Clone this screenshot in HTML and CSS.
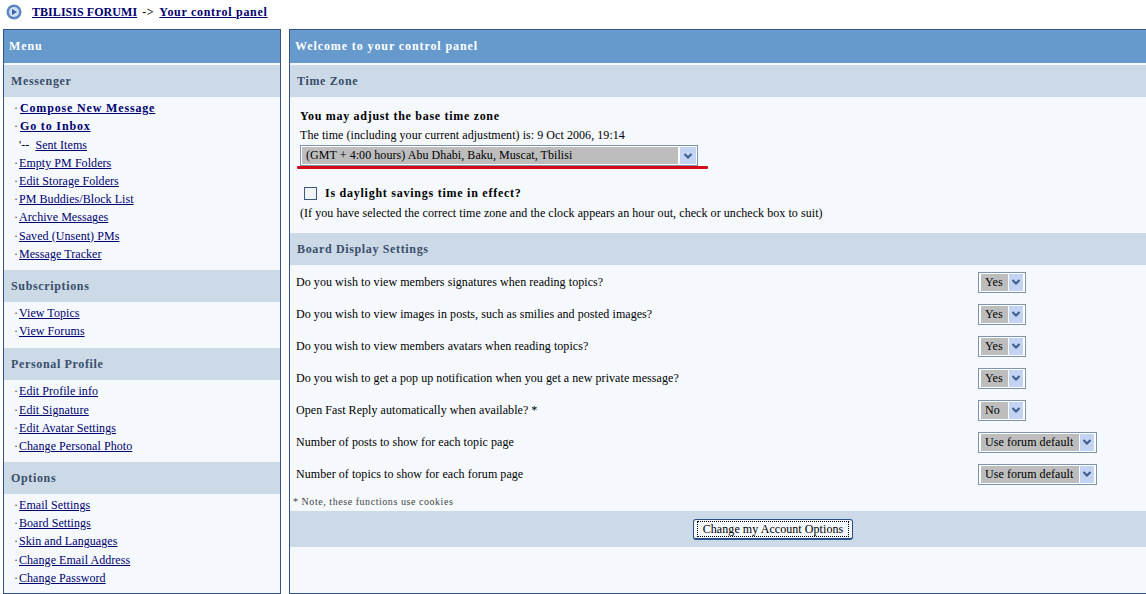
FILE: index.html
```html
<!DOCTYPE html>
<html lang="en">
<head>
  <meta charset="UTF-8">
  <title>Your control panel</title>
  <link rel="stylesheet" href="styles.css">
</head>
<body>

  <div class="nav">
    <svg class="nav-icon" width="16" height="16" viewBox="0 0 16 16">
      <circle cx="8" cy="8" r="7.5" fill="#5f86c4"/>
      <circle cx="8" cy="8" r="5" fill="#cfe0f5"/>
      <path d="M6 5l5 3-5 3z" fill="#3c64a8"/>
    </svg>
    <a class="nav-home" href="#">TBILISIS FORUMI</a>
    <span class="nav-sep">-&gt;</span>
    <a href="#">Your control panel</a>
  </div>

  <div class="page">
    <div class="panel menu">
      <div class="maintitle">Menu</div>

      <div class="subtitle">Messenger</div>
      <ul class="links">
        <li><a class="strong" href="#">Compose New Message</a></li>
        <li><a class="strong" href="#">Go to Inbox</a></li>
        <li class="sub">'-- <a href="#">Sent Items</a></li>
        <li><a href="#">Empty PM Folders</a></li>
        <li><a href="#">Edit Storage Folders</a></li>
        <li><a href="#">PM Buddies/Block List</a></li>
        <li><a href="#">Archive Messages</a></li>
        <li><a href="#">Saved (Unsent) PMs</a></li>
        <li><a href="#">Message Tracker</a></li>
      </ul>

      <div class="subtitle">Subscriptions</div>
      <ul class="links short">
        <li><a href="#">View Topics</a></li>
        <li><a href="#">View Forums</a></li>
      </ul>

      <div class="subtitle">Personal Profile</div>
      <ul class="links">
        <li><a href="#">Edit Profile info</a></li>
        <li><a href="#">Edit Signature</a></li>
        <li><a href="#">Edit Avatar Settings</a></li>
        <li><a href="#">Change Personal Photo</a></li>
      </ul>

      <div class="subtitle">Options</div>
      <ul class="links">
        <li><a href="#">Email Settings</a></li>
        <li><a href="#">Board Settings</a></li>
        <li><a href="#">Skin and Languages</a></li>
        <li><a href="#">Change Email Address</a></li>
        <li><a href="#">Change Password</a></li>
      </ul>
    </div>

    <div class="panel content">
      <div class="maintitle">Welcome to your control panel</div>

      <div class="subtitle">Time Zone</div>
      <div class="timezone">
        <p class="tz-title">You may adjust the base time zone</p>
        <p class="tz-time">The time (including your current adjustment) is: 9 Oct 2006, 19:14</p>
        <div class="tz-select">
          <div class="select wide">
            <span class="select-text">(GMT + 4:00 hours) Abu Dhabi, Baku, Muscat, Tbilisi</span>
            <span class="select-btn"><svg width="14" height="14" viewBox="0 0 14 14"><path d="M3.500 5l3.500 3.500L10.500 5" fill="none" stroke="#3d5a8c" stroke-width="2"/></svg></span>
          </div>
          <div class="red-line"></div>
        </div>
        <div class="dst">
          <span class="checkbox"></span>
          <span class="dst-label">Is daylight savings time in effect?</span>
        </div>
        <p class="dst-note">(If you have selected the correct time zone and the clock appears an hour out, check or uncheck box to suit)</p>
      </div>

      <div class="subtitle">Board Display Settings</div>
      <div class="settings">
        <div class="row">
          <span class="row-label">Do you wish to view members signatures when reading topics?</span>
          <div class="select"><span class="select-text short">Yes</span><span class="select-btn"><svg width="14" height="14" viewBox="0 0 14 14"><path d="M3.500 5l3.500 3.500L10.500 5" fill="none" stroke="#3d5a8c" stroke-width="2"/></svg></span></div>
        </div>
        <div class="row">
          <span class="row-label">Do you wish to view images in posts, such as smilies and posted images?</span>
          <div class="select"><span class="select-text short">Yes</span><span class="select-btn"><svg width="14" height="14" viewBox="0 0 14 14"><path d="M3.500 5l3.500 3.500L10.500 5" fill="none" stroke="#3d5a8c" stroke-width="2"/></svg></span></div>
        </div>
        <div class="row">
          <span class="row-label">Do you wish to view members avatars when reading topics?</span>
          <div class="select"><span class="select-text short">Yes</span><span class="select-btn"><svg width="14" height="14" viewBox="0 0 14 14"><path d="M3.500 5l3.500 3.500L10.500 5" fill="none" stroke="#3d5a8c" stroke-width="2"/></svg></span></div>
        </div>
        <div class="row">
          <span class="row-label">Do you wish to get a pop up notification when you get a new private message?</span>
          <div class="select"><span class="select-text short">Yes</span><span class="select-btn"><svg width="14" height="14" viewBox="0 0 14 14"><path d="M3.500 5l3.500 3.500L10.500 5" fill="none" stroke="#3d5a8c" stroke-width="2"/></svg></span></div>
        </div>
        <div class="row">
          <span class="row-label">Open Fast Reply automatically when available? *</span>
          <div class="select"><span class="select-text short">No</span><span class="select-btn"><svg width="14" height="14" viewBox="0 0 14 14"><path d="M3.500 5l3.500 3.500L10.500 5" fill="none" stroke="#3d5a8c" stroke-width="2"/></svg></span></div>
        </div>
        <div class="row">
          <span class="row-label">Number of posts to show for each topic page</span>
          <div class="select"><span class="select-text long">Use forum default</span><span class="select-btn"><svg width="14" height="14" viewBox="0 0 14 14"><path d="M3.500 5l3.500 3.500L10.500 5" fill="none" stroke="#3d5a8c" stroke-width="2"/></svg></span></div>
        </div>
        <div class="row">
          <span class="row-label">Number of topics to show for each forum page</span>
          <div class="select"><span class="select-text long">Use forum default</span><span class="select-btn"><svg width="14" height="14" viewBox="0 0 14 14"><path d="M3.500 5l3.500 3.500L10.500 5" fill="none" stroke="#3d5a8c" stroke-width="2"/></svg></span></div>
        </div>
      </div>
      <p class="cookie-note">* Note, these functions use cookies</p>

      <div class="submit-bar">
        <button class="submit" type="button"><span>Change my Account Options</span></button>
      </div>
    </div>
  </div>

</body>
</html>
```

FILE: styles.css
```css
html, body {
  height: 100%;
}

body {
  margin: 0;
  background: #fff;
  color: #000;
  font-family: "Liberation Serif", serif;
  font-size: 12px;
  letter-spacing: 0.06px;
  overflow: hidden;
}

a {
  color: #000070;
  text-decoration: underline;
}

p {
  margin: 0;
}

.nav {
  display: flex;
  align-items: center;
  height: 29px;
  padding: 0 0 5px 6px;
  box-sizing: border-box;
  font-weight: bold;
  letter-spacing: 0.7px;
}

.nav-icon {
  margin-right: 10px;
}

.nav-home {
  letter-spacing: 0.05px;
}

.nav-sep {
  margin: 0 5px;
  color: #222;
}

.page {
  display: flex;
  gap: 8px;
  height: 565px;
  padding-left: 3px;
}

.panel {
  box-sizing: border-box;
  border: 1px solid #345487;
  background: #f5f9fd;
}

.menu {
  width: 278px;
  flex: none;
}

.content {
  flex: 1;
  min-width: 0;
  border-right: 0;
}

.maintitle {
  height: 33px;
  line-height: 33px;
  padding-left: 5px;
  margin-bottom: 2px;
  background: #6699cc;
  color: #fff;
  font-weight: bold;
  letter-spacing: 0.9px;
}

.subtitle {
  height: 32px;
  line-height: 32px;
  padding-left: 7px;
  background: #ccd9e6;
  color: #3a4f6c;
  font-weight: bold;
  letter-spacing: 0.65px;
}

.links {
  list-style: none;
  margin: 0;
  padding: 2.3px 0 6.7px 15px;
}

.links.short {
  padding-bottom: 7.7px;
}

.links li {
  position: relative;
  height: 18.2px;
  line-height: 18.2px;
}

.links li::before {
  content: "\00b7";
  position: absolute;
  left: -5px;
  color: #444;
}

.links li.sub::before {
  content: none;
}

.links li.sub a {
  margin-left: 3px;
}

.links .strong {
  margin-left: 1px;
  font-weight: bold;
  letter-spacing: 0.84px;
}

.timezone {
  padding: 12px 0 0 10px;
  height: 136px;
  box-sizing: border-box;
}

.tz-title {
  font-weight: bold;
  letter-spacing: 0.7px;
  line-height: 14px;
  margin-bottom: 5px;
}

.tz-time {
  line-height: 14px;
}

.tz-select {
  position: relative;
  width: 398px;
  margin-top: 3px;
}

.select {
  display: inline-flex;
  gap: 1px;
  box-sizing: border-box;
  height: 21px;
  padding: 1px 2px;
  border: 1px solid #7e93ad;
  background: #fff;
}

.select.wide {
  display: flex;
  gap: 2px;
  padding: 1px;
}

.select-text {
  flex: 1;
  padding-left: 4px;
  background: #bdbdbd;
  line-height: 17px;
}

.select-text.short {
  width: 23px;
  flex: none;
}

.select-text.long {
  width: 94px;
  flex: none;
}

.select-btn {
  display: flex;
  align-items: center;
  justify-content: center;
  width: 14px;
  background: #c2d3f3;
}

.select.wide .select-btn {
  width: 16px;
}

/* hand drawn red mark under the time zone box */
.red-line {
  position: absolute;
  left: -3px;
  top: 21px;
  width: 411px;
  height: 3px;
  background: #d40b16;
  border-radius: 1px;
}

.dst {
  display: flex;
  align-items: center;
  gap: 8px;
  height: 14px;
  margin: 20px 0 0 4px;
}

.checkbox {
  width: 11px;
  height: 11px;
  border: 1px solid #3d5a7a;
  background: #f2f5f7;
}

.dst-label {
  font-weight: bold;
  letter-spacing: 0.75px;
}

.dst-note {
  margin-top: 6px;
  line-height: 14px;
}

.settings {
  padding: 1px 0 0 6px;
}

.row {
  display: flex;
  align-items: center;
  height: 32px;
}

.row-label {
  width: 682px;
  flex: none;
}

.cookie-note {
  padding: 6px 0 3px 3px;
  color: #444;
  font-size: 10px;
  letter-spacing: 0.55px;
  line-height: 12px;
}

.submit-bar {
  display: flex;
  align-items: center;
  height: 36px;
  padding-left: 403px;
  background: #ccd9e6;
}

.submit {
  width: 160px;
  height: 21px;
  padding: 2px 4px;
  border: 1px solid #2c4f86;
  border-bottom-width: 2px;
  border-radius: 3px;
  background: #f5f9fd;
  font-family: inherit;
  font-size: 12px;
  letter-spacing: 0.06px;
  color: #000;
}

.submit span {
  display: block;
  outline: 1px dotted #000;
  line-height: 14px;
}
```
